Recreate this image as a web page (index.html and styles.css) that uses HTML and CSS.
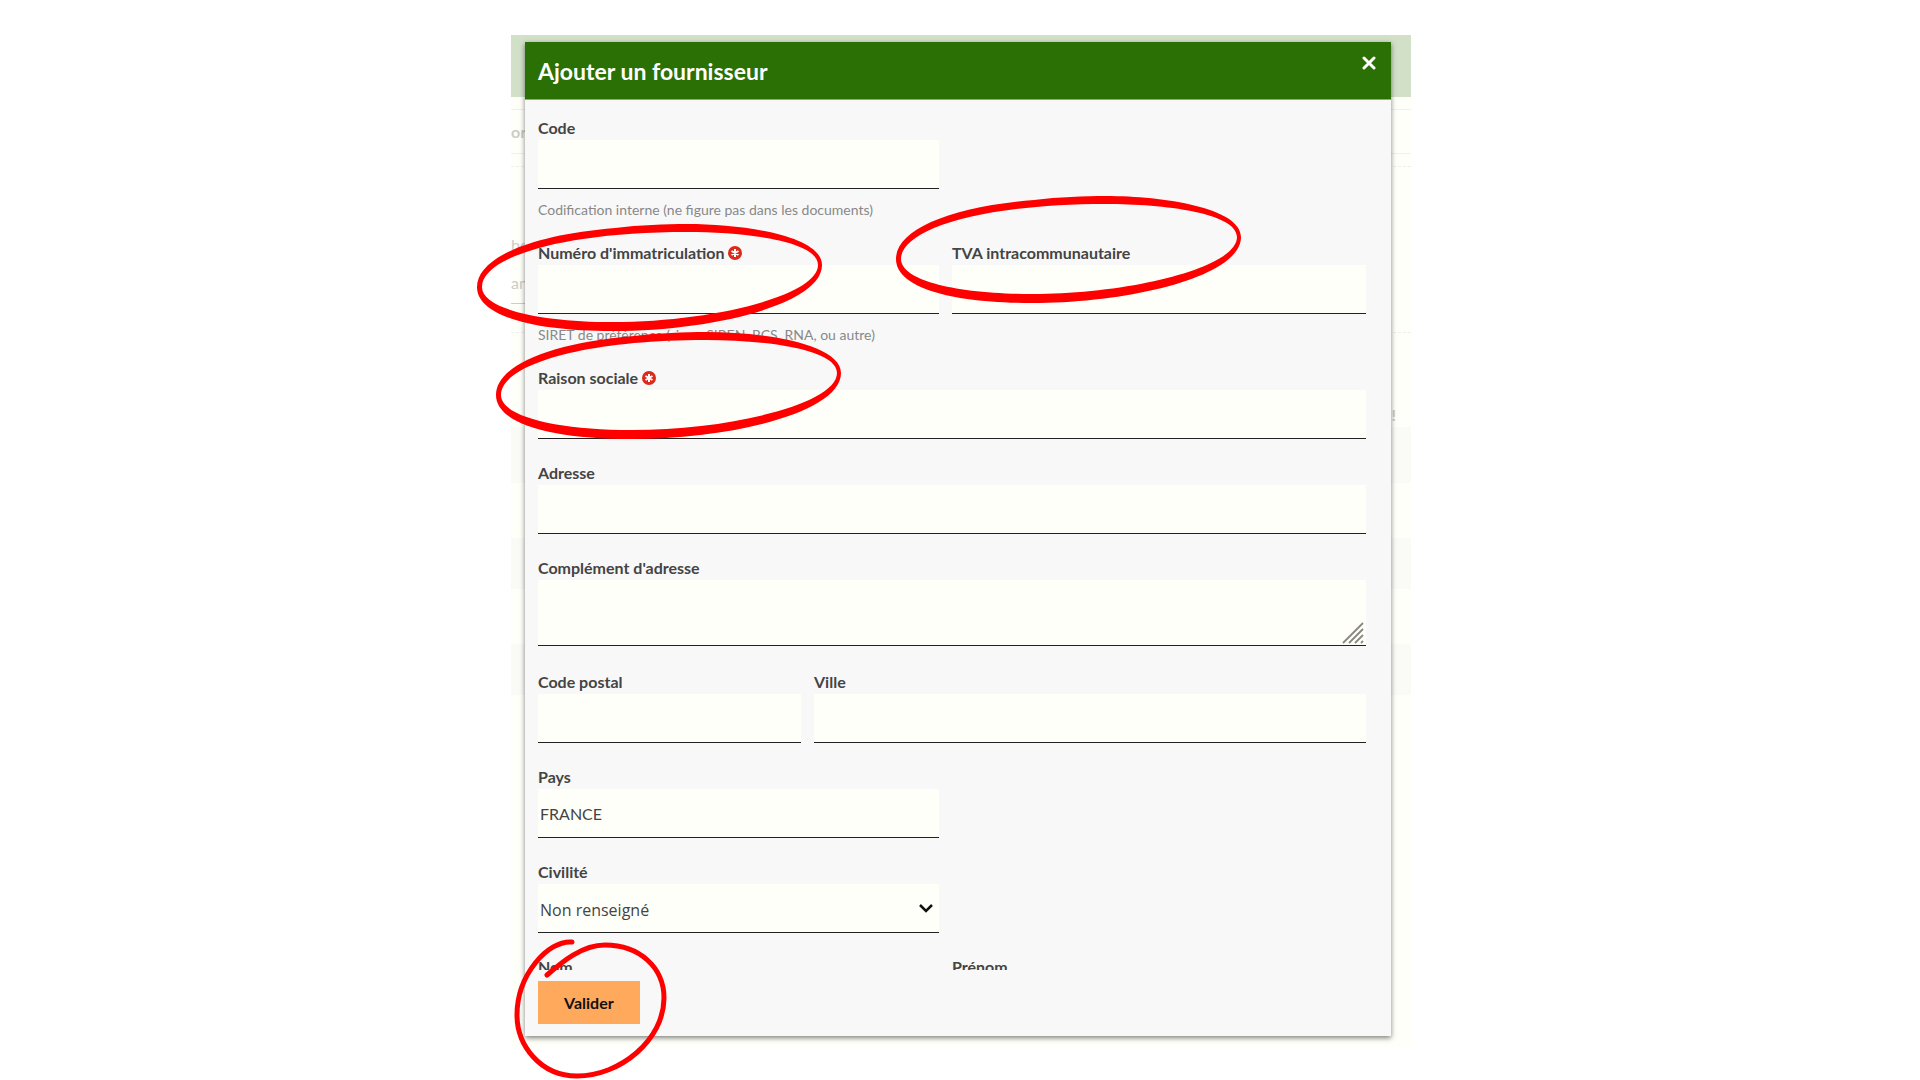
FILE: index.html
```html
<!DOCTYPE html>
<html lang="fr">
<head>
    <meta charset="UTF-8">
    <meta name="viewport" content="width=device-width, initial-scale=1.0">
    <title>Ajouter un fournisseur</title>
    <link rel="stylesheet" href="styles.css">
</head>
<body>

<div class="screen">

    <!-- Page en arrière-plan -->
    <div class="backdrop">
        <div class="backdrop-header"></div>
        <div class="backdrop-tabs">or</div>
        <div class="backdrop-form">
            <div class="backdrop-label">be</div>
            <div class="backdrop-input">an</div>
        </div>
        <div class="backdrop-total">!</div>
        <div class="backdrop-rows">
            <div></div>
            <div></div>
            <div></div>
            <div></div>
            <div></div>
        </div>
    </div>

    <form class="modal" onsubmit="return false">
        <div class="modal-header">
            <h1>Ajouter un fournisseur</h1>
            <button type="button" class="close" aria-label="Fermer">
                <svg width="14" height="14" viewBox="0 0 14 14"><path d="M2 2L12 12M12 2L2 12"/></svg>
            </button>
        </div>

        <div class="modal-body">
            <div class="field half">
                <label for="code">Code</label>
                <input type="text" id="code">
                <small>Codification interne (ne figure pas dans les documents)</small>
            </div>

            <div class="field half start">
                <label for="siret">Numéro d'immatriculation
                    <svg class="required" width="14" height="14" viewBox="0 0 14 14"><circle cx="7" cy="7" r="7"/><path d="M7 3V11M3.5 5L10.5 9M10.5 5L3.5 9"/></svg>
                </label>
                <input type="text" id="siret">
                <small>SIRET de préférence (sinon SIREN, RCS, RNA, ou autre)</small>
            </div>
            <div class="field half last">
                <label for="tva">TVA intracommunautaire</label>
                <input type="text" id="tva">
            </div>

            <div class="field full last">
                <label for="raison">Raison sociale
                    <svg class="required" width="14" height="14" viewBox="0 0 14 14"><circle cx="7" cy="7" r="7"/><path d="M7 3V11M3.5 5L10.5 9M10.5 5L3.5 9"/></svg>
                </label>
                <input type="text" id="raison">
            </div>

            <div class="field full last">
                <label for="adresse">Adresse</label>
                <input type="text" id="adresse">
            </div>

            <div class="field full last">
                <label for="complement">Complément d'adresse</label>
                <textarea id="complement"></textarea>
            </div>

            <div class="field third">
                <label for="cp">Code postal</label>
                <input type="text" id="cp">
            </div>
            <div class="field two-thirds last">
                <label for="ville">Ville</label>
                <input type="text" id="ville">
            </div>

            <div class="field half start">
                <label for="pays">Pays</label>
                <input type="text" id="pays" value="FRANCE">
            </div>

            <div class="field half start">
                <label for="civilite">Civilité</label>
                <select id="civilite">
                    <option>Non renseigné</option>
                </select>
            </div>

            <div class="field half start">
                <label for="nom">Nom</label>
                <input type="text" id="nom">
            </div>
            <div class="field half last">
                <label for="prenom">Prénom</label>
                <input type="text" id="prenom">
            </div>
        </div>

        <div class="modal-footer">
            <button type="submit" class="submit">Valider</button>
        </div>
    </form>
</div>

<!-- Annotations rouges -->
<svg class="marks" viewBox="0 0 1920 1080">
    <defs>
        <path id="ring" fill-rule="evenodd" d="M477 287C477 258 530 235 615 228C640 225 665 224 687 224C745 224 822 236 822 265C822 305 710 331 613 331C530 331 477 315 477 287Z
            M482 287C482 309 540 322 613 322C710 322 818 296 818 265C818 241 745 232 687 232C560 232 482 258 482 287Z"/>
    </defs>
    <use href="#ring"/>
    <use href="#ring" x="419" y="-28"/>
    <use href="#ring" x="19" y="108"/>
    <path class="loop" d="M572 942C548 940 517 975 517 1015C517 1045 540 1076 577 1076C620 1076 664 1040 664 998C664 968 640 945 605 945C582 945 562 962 547 975"/>
</svg>

</body>
</html>
```
FILE: styles.css
```css
* {
    box-sizing: border-box;
}

body {
    margin: 0;
    background: #fff;
    color: #444;
    font-family: Lato, sans-serif;
    font-size: 16px;
    overflow: hidden;
}

/* La page et la fenêtre partagent la même cellule */
.screen {
    display: grid;
    max-width: 902px;
    height: 100vh;
    margin: 0 auto;
    padding: 35px 0 33px 2px;
}

.backdrop,
.modal {
    grid-area: 1 / 1;
    min-height: 0;
}

.backdrop {
    background: #fffffa;
    color: #ccccc8;
    overflow: hidden;
}

.backdrop-header {
    height: 62px;
    background: #d2e0c8;
}

.backdrop-tabs {
    height: 45px;
    margin-top: 12px;
    border-top: 1px solid #fdeedd;
    border-bottom: 1px solid #f6f0e8;
    line-height: 44px;
    font-weight: bold;
}

.backdrop-form {
    height: 167px;
    margin-top: 12px;
    padding-top: 66px;
    border-top: 1px dashed #eeeeea;
    border-bottom: 1px dashed #eeeeea;
}

.backdrop-label {
    line-height: 24px;
}

.backdrop-input {
    width: 50%;
    height: 47px;
    line-height: 52px;
    border-bottom: 1px solid #c8d0c0;
}

.backdrop-total {
    height: 94px;
    padding-right: 15px;
    line-height: 164px;
    text-align: right;
    font-weight: bold;
}

.backdrop-rows div {
    height: 55px;
}

.backdrop-rows div:nth-child(odd) {
    height: 51px;
    background: #fafaf6;
}

.backdrop-rows div:first-child {
    height: 56px;
}

.modal {
    display: flex;
    flex-direction: column;
    margin: 7px 20px 11px 14px;
    background: #f8f8f8;
    box-shadow: 0 2px 5px rgba(0, 0, 0, 0.5);
}

.modal-header {
    display: flex;
    justify-content: space-between;
    align-items: flex-start;
    height: 58px;
    padding: 0 15px 0 13px;
    background: #2a7004;
    border-bottom: 1px solid #80b860;
    color: #fff;
}

.modal-header h1 {
    margin: 0;
    font-size: 23px;
    line-height: 58px;
}

.close {
    display: flex;
    margin-top: 14px;
    padding: 0;
    border: none;
    background: none;
    cursor: pointer;
}

.close path {
    fill: none;
    stroke: #fff;
    stroke-width: 3;
    stroke-linecap: round;
}

.modal-body {
    flex: 1;
    min-height: 0;
    display: grid;
    grid-template-columns: repeat(6, 1fr);
    align-content: start;
    row-gap: 22px;
    padding: 16px 25px 0 13px;
    overflow: hidden;
}

.field {
    display: flex;
    flex-direction: column;
    padding-right: 13px;
}

.half {
    grid-column: span 3;
}

.start {
    grid-column: 1 / span 3;
}

.third {
    grid-column: span 2;
}

.two-thirds {
    grid-column: span 4;
}

.full {
    grid-column: span 6;
}

.last {
    padding-right: 0;
}

label {
    height: 24px;
    line-height: 24px;
    font-weight: bold;
}

.required {
    vertical-align: -1px;
}

.required circle {
    fill: #dc2a1a;
}

.required path {
    stroke: #fff;
    stroke-width: 2;
}

input,
select,
textarea {
    width: 100%;
    height: 49px;
    padding: 0 2px;
    border: none;
    border-bottom: 1px solid #222;
    border-radius: 0;
    background: #fffffa;
    color: #444;
    font-family: Lato, sans-serif;
    font-size: 16px;
}

select {
    appearance: none;
    padding-top: 3px;
    font-family: "Open Sans", sans-serif;
    background: #fffffa url("data:image/svg+xml,%3Csvg xmlns='http://www.w3.org/2000/svg' width='14' height='10'%3E%3Cpath d='M1 2L7 8L13 2' fill='none' stroke='%23111' stroke-width='2.5'/%3E%3C/svg%3E") no-repeat right 6px center;
}

textarea {
    height: 66px;
    margin-bottom: 2px;
    resize: none;
    background: #fffffa url("data:image/svg+xml,%3Csvg xmlns='http://www.w3.org/2000/svg' width='22' height='22'%3E%3Cpath d='M1 21L21 1M7 21L21 7M13 21L21 13M19 21L21 19' stroke='%23888880' stroke-width='1.8'/%3E%3C/svg%3E") no-repeat right 2px bottom 1px;
}

small {
    height: 30px;
    padding-top: 8px;
    line-height: 26px;
    font-size: 14px;
    color: #888;
}

.modal-footer {
    padding: 11px 13px 12px;
}

.submit {
    height: 43px;
    padding: 0 26px;
    border: none;
    background: #ffa95c;
    color: #111;
    font-family: Lato, sans-serif;
    font-size: 16px;
    font-weight: bold;
    cursor: pointer;
}

.marks {
    position: absolute;
    top: 0;
    left: 0;
    width: 100%;
    height: 100%;
    fill: #f00;
    pointer-events: none;
}

.loop {
    fill: none;
    stroke: #f00;
    stroke-width: 5;
    stroke-linecap: round;
}
```
